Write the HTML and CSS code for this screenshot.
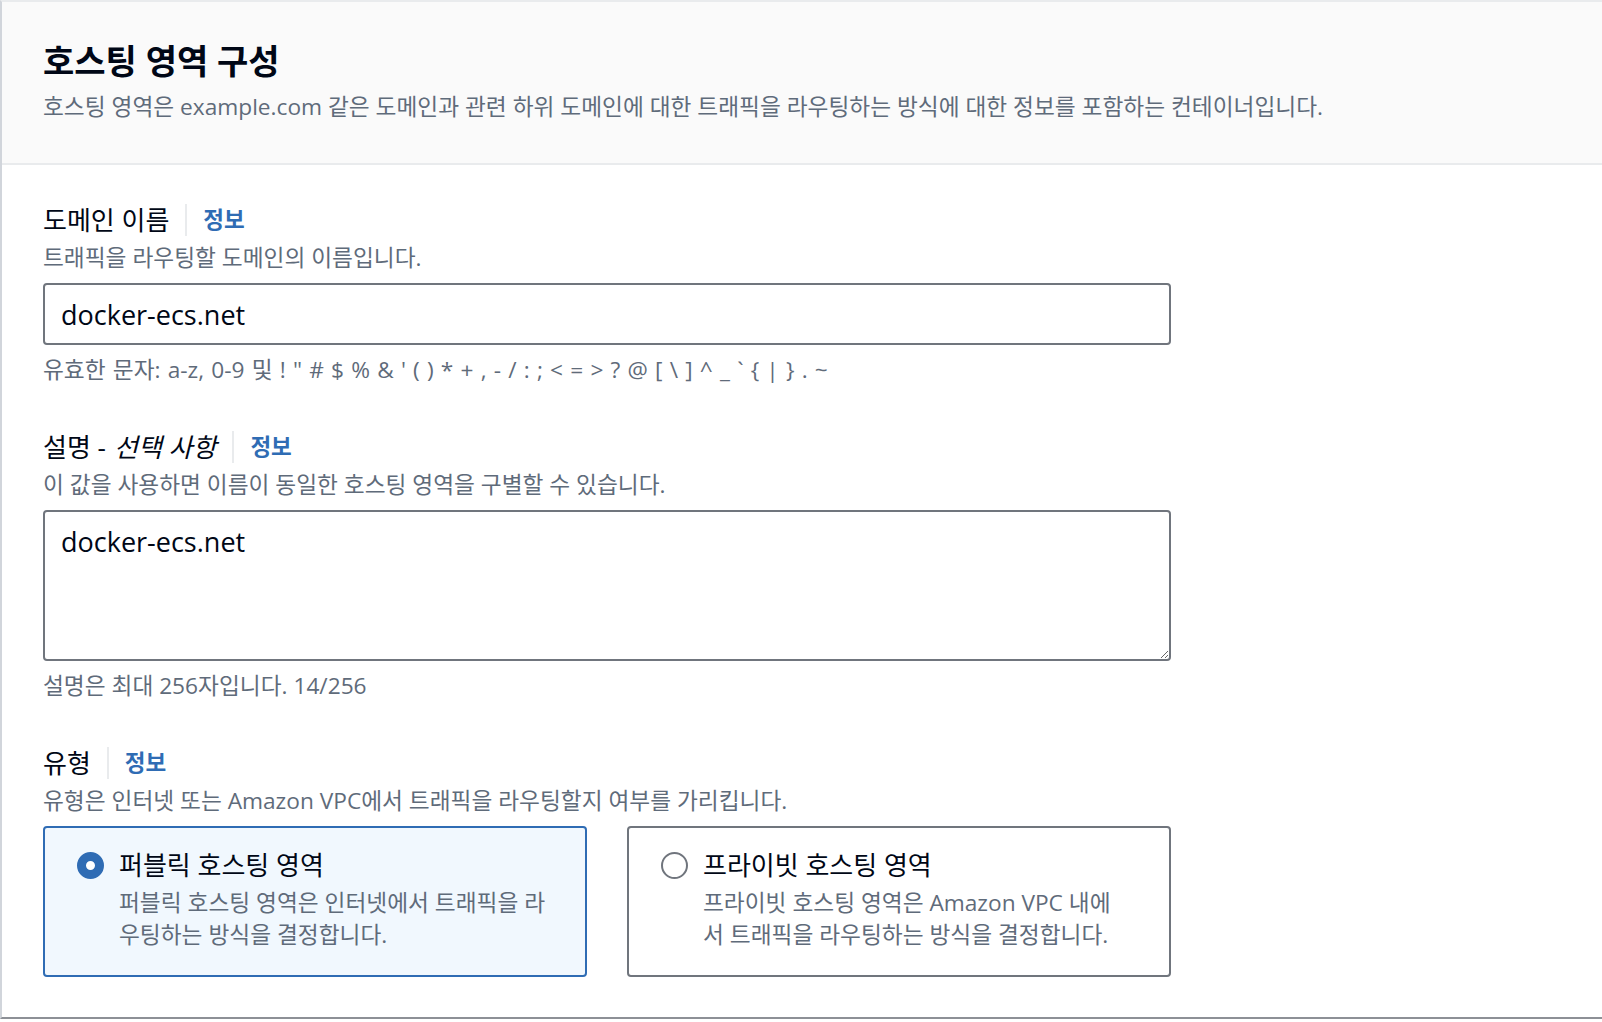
FILE: index.html
```html
<!DOCTYPE html>
<html lang="ko">
<head>
    <meta charset="UTF-8">
    <title>호스팅 영역 구성</title>
    <link rel="stylesheet" href="styles.css">
</head>
<body>
    <div class="panel">
        <!-- 헤더 -->
        <div class="panel-header">
            <h1 class="panel-title">호스팅 영역 구성</h1>
            <p class="panel-desc">호스팅 영역은 example.com 같은 도메인과 관련 하위 도메인에 대한 트래픽을 라우팅하는 방식에 대한 정보를 포함하는 컨테이너입니다.</p>
        </div>

        <div class="panel-body">
            <!-- 도메인 이름 -->
            <div class="field">
                <div class="field-label">도메인 이름<a class="info" href="#">정보</a></div>
                <div class="field-desc">트래픽을 라우팅할 도메인의 이름입니다.</div>
                <input class="text-input" type="text" value="docker-ecs.net">
                <div class="field-hint chars">유효한 문자: a-z, 0-9 및 ! " # $ % &amp; ' ( ) * + , - / : ; &lt; = &gt; ? @ [ \ ] ^ _ ` { | } . ~</div>
            </div>

            <!-- 설명 -->
            <div class="field">
                <div class="field-label">설명 - <i>선택 사항</i><a class="info" href="#">정보</a></div>
                <div class="field-desc">이 값을 사용하면 이름이 동일한 호스팅 영역을 구별할 수 있습니다.</div>
                <textarea class="text-area">docker-ecs.net</textarea>
                <div class="field-hint">설명은 최대 256자입니다. 14/256</div>
            </div>

            <!-- 유형 -->
            <div class="field">
                <div class="field-label">유형<a class="info" href="#">정보</a></div>
                <div class="field-desc">유형은 인터넷 또는 Amazon VPC에서 트래픽을 라우팅할지 여부를 가리킵니다.</div>
                <div class="tiles">
                    <div class="tile selected">
                        <span class="radio"></span>
                        <div>
                            <div class="tile-title">퍼블릭 호스팅 영역</div>
                            <div class="tile-desc">퍼블릭 호스팅 영역은 인터넷에서 트래픽을 라<br>우팅하는 방식을 결정합니다.</div>
                        </div>
                    </div>
                    <div class="tile">
                        <span class="radio"></span>
                        <div>
                            <div class="tile-title">프라이빗 호스팅 영역</div>
                            <div class="tile-desc">프라이빗 호스팅 영역은 Amazon VPC 내에<br>서 트래픽을 라우팅하는 방식을 결정합니다.</div>
                        </div>
                    </div>
                </div>
            </div>
        </div>
    </div>
</body>
</html>
```

FILE: styles.css
```css
body {
    margin: 0;
    background-color: #fff;
    font-family: "Open Sans", "Noto Sans CJK KR", sans-serif;
    color: #000716;
    overflow: hidden;
}
.panel {
    border-top: 2px solid #e9ebed;
    border-left: 2px solid #d1d5db;
    border-bottom: 2px solid #8d9096;
    box-shadow: 0 1px 3px rgba(0, 7, 22, 0.25);
}
.panel-header {
    background-color: #fafafa;
    border-bottom: 2px solid #e9ebed;
    padding: 37px 41px 41px;
}
.panel-title {
    margin: 0;
    font-size: 34px;
    line-height: 44px;
    font-weight: bold;
    color: #000716;
}
.panel-desc {
    margin: 9px 0 0;
    font-size: 22.7px;
    line-height: 30px;
    color: #5f6b7a;
}
.panel-body {
    padding: 38px 41px 40px;
    display: flex;
    flex-direction: column;
    gap: 45px;
}
.field {
    width: 1128px;
}
.field-label {
    display: flex;
    align-items: center;
    font-size: 26px;
    line-height: 34px;
    height: 34px;
}
.field-label i {
    margin-left: 8px;
}
.info {
    margin-left: 16px;
    padding-left: 16px;
    border-left: 2px solid #e9ebed;
    font-size: 22.5px;
    line-height: 32px;
    font-weight: bold;
    color: #2f6cb4;
    text-decoration: none;
}
.field-desc {
    margin-top: 6px;
    font-size: 22.7px;
    line-height: 30px;
    color: #5f6b7a;
}
.field-hint {
    margin-top: 10px;
    font-size: 22.7px;
    line-height: 30px;
    color: #5f6b7a;
}
.field-hint.chars {
    word-spacing: 1.3px;
}
.text-input, .text-area {
    display: block;
    box-sizing: border-box;
    width: 100%;
    margin-top: 10px;
    border: 2px solid #70757d;
    border-radius: 4px;
    font-family: inherit;
    font-size: 27px;
    color: #000716;
    background: #fff;
    outline: none;
}
.text-input {
    height: 62px;
    padding: 0 16px;
}
.text-area {
    height: 151px;
    padding: 13px 16px;
    line-height: 34px;
    resize: vertical;
}
.tiles {
    margin-top: 10px;
    display: grid;
    grid-template-columns: 1fr 1fr;
    gap: 40px;
}
.tile {
    box-sizing: border-box;
    height: 151px;
    display: flex;
    gap: 15px;
    padding: 20px 20px 0 32px;
    border: 2px solid #70757d;
    border-radius: 4px;
}
.tile.selected {
    border-color: #2f6cb4;
    background-color: #f1f8fe;
}
.radio {
    flex: none;
    box-sizing: border-box;
    width: 27px;
    height: 27px;
    margin-top: 4px;
    border: 2px solid #70757d;
    border-radius: 50%;
    background: #fff;
}
.tile.selected .radio {
    border: 9px solid #2f6cb4;
}
.tile-title {
    font-size: 26px;
    line-height: 34px;
}
.tile-desc {
    margin-top: 5px;
    font-size: 22.7px;
    line-height: 32px;
    color: #5f6b7a;
}
```
